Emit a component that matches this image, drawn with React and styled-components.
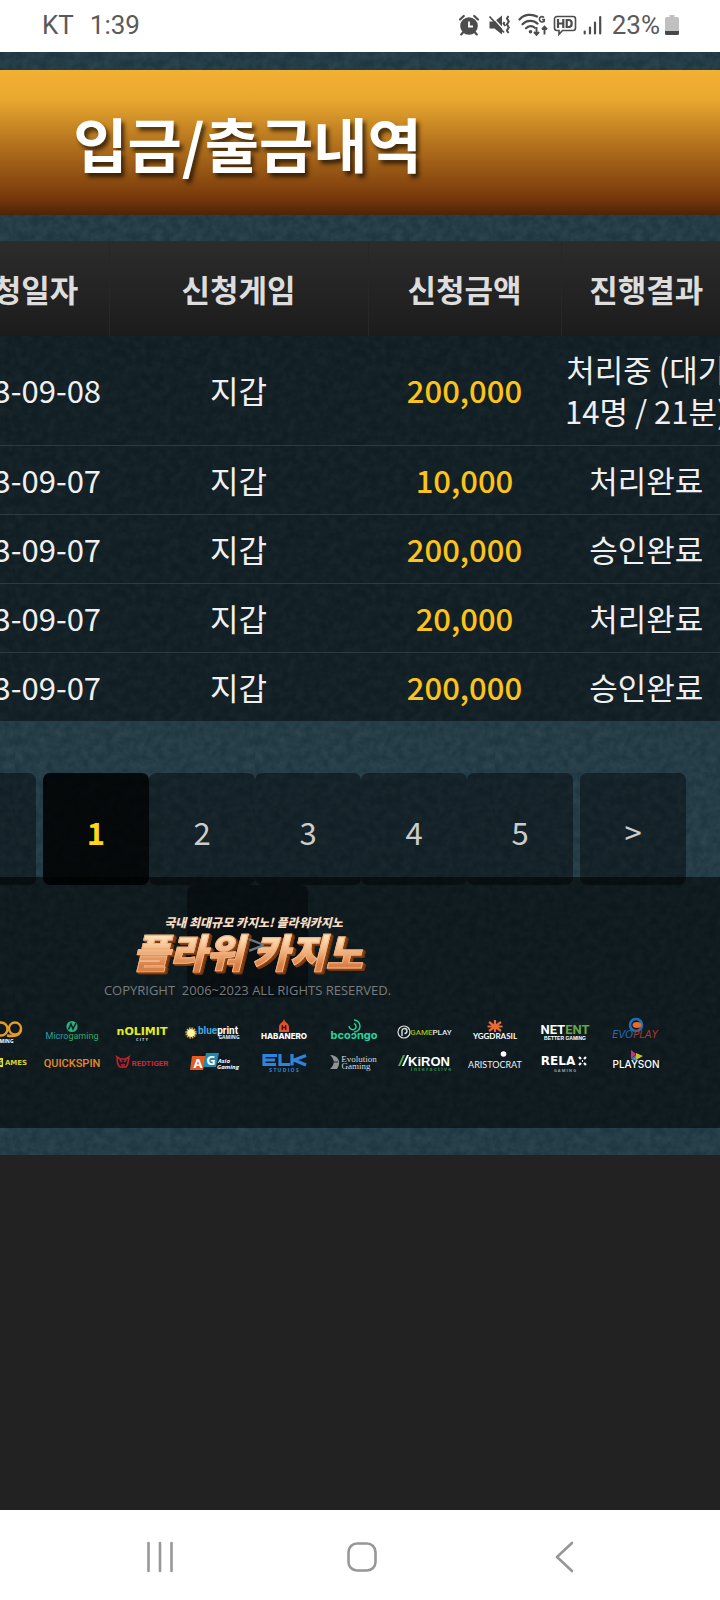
import React from "react";
import styled, { createGlobalStyle, css } from "styled-components";

const noise =
  "url(\"data:image/svg+xml,%3Csvg xmlns='http://www.w3.org/2000/svg' width='240' height='240'%3E%3Cfilter id='n'%3E%3CfeTurbulence type='fractalNoise' baseFrequency='0.12' numOctaves='3' stitchTiles='stitch'/%3E%3CfeColorMatrix values='0 0 0 0 0.35 0 0 0 0 0.42 0 0 0 0 0.42 0 0.2 0 0 -0.05'/%3E%3C/filter%3E%3Crect width='240' height='240' filter='url(%23n)'/%3E%3C/svg%3E\")";

const GlobalStyle = createGlobalStyle`
  * {
    box-sizing: border-box;
  }

  body {
    margin: 0;
    background: #222222;
    font-family: "Noto Sans CJK KR", "Noto Sans", sans-serif;
  }
`;

const Screen = styled.div`
  display: flex;
  flex-direction: column;
  min-height: 100vh;
  overflow: hidden;
`;

const StatusBar = styled.header`
  display: flex;
  align-items: center;
  justify-content: space-between;
  height: 52px;
  padding: 0 40px 2px 42px;
  background: white;
  color: #5a5a5a;
  font-family: Roboto, sans-serif;
  font-size: 26px;
  line-height: 32px;
`;

const StatusLeft = styled.div`
  display: flex;
  gap: 16px;
`;

const StatusRight = styled.div`
  display: flex;
  align-items: center;
  gap: 5px;

  svg {
    display: block;
  }
`;

/* the page is wider than the window and is panned to its right end */
const Site = styled.main`
  width: calc(100% + 225px);
  margin-left: -225px;
  padding: 18px 0 27px;
  background: ${noise}, #1e3742;
`;

const Banner = styled.div`
  display: flex;
  align-items: center;
  justify-content: center;
  height: 145px;
  margin-bottom: 26px;
  background: linear-gradient(
    #f2b034 0%,
    #e9a930 20%,
    #b9771f 48%,
    #8f4f12 74%,
    #78390b 88%,
    #4c2407 100%
  );
`;

const Title = styled.h1`
  margin: 0;
  color: #ffffff;
  font-size: 59px;
  font-weight: 700;
  line-height: 84px;
  text-shadow: 3px 4px 4px rgba(0, 0, 0, 0.65);
`;

const History = styled.table`
  width: calc(100% - 147px);
  margin-left: 159px;
  border-collapse: collapse;
  table-layout: fixed;
  font-size: 31px;
  line-height: 42px;
  text-align: center;
`;

const HeadCell = styled.th`
  width: ${(props) => props.$width || "auto"};
  height: 95px;
  padding: 0;
  border-right: 1px solid #272727;
  color: #dddddd;
  font-weight: 700;
`;

const HeadRow = styled.tr`
  background: linear-gradient(#2c2c2c, #1c1c1c);
`;

const Row = styled.tr`
  background: rgba(0, 0, 0, 0.45);
  border-bottom: 1px solid #2c3b42;
`;

const Cell = styled.td`
  height: 69px;
  padding: 12px 0 13px;
  color: ${(props) => (props.$amount ? "#fcc419" : "#f0f0f0")};
  font-weight: ${(props) => (props.$amount ? 500 : 400)};
  white-space: nowrap;
`;

/* the last button wraps and hangs down over the footer */
const Pagination = styled.nav`
  display: flex;
  flex-wrap: wrap;
  align-content: flex-start;
  justify-content: center;
  height: 104px;
  margin-top: 51px;
`;

const PageButton = styled.button`
  width: ${(props) => (props.$edge ? "121px" : "106px")};
  height: 112px;
  margin: ${(props) => (props.$step ? props.$step : "0")};
  padding: 6px 0 0 ${(props) => (props.$edge ? "18px" : "0")};
  border: none;
  border-radius: 7px;
  background: rgba(0, 0, 0, 0.42);
  color: ${(props) => (props.$edge ? "#70757a" : "#cccccc")};
  font-family: inherit;
  font-size: 31px;
  line-height: 42px;

  span {
    position: relative;
    z-index: 2;
  }

  ${(props) =>
    props.$active &&
    css`
      background: rgba(0, 0, 0, 0.85);
      color: #ffd814;
      font-weight: 700;
    `}
`;

const Footer = styled.footer`
  height: 251px;
  padding-top: 36px;
  background: rgba(0, 0, 0, 0.55);
  text-align: center;
`;

const Tagline = styled.p`
  margin: 0;
  padding-left: 12px;
  color: #f6dcc2;
  font-size: 12px;
  font-style: italic;
  font-weight: 900;
  line-height: 18px;
`;

const Brand = styled.h2`
  width: fit-content;
  margin: 0 auto;
  padding: 0 6px;
  background: linear-gradient(#ffe0b8 15%, #f0ae78 55%, #d98047 85%);
  background-clip: text;
  -webkit-background-clip: text;
  -webkit-text-stroke: 1px #efb285;
  color: transparent;
  filter: drop-shadow(1px 1px 0 #8c4312) drop-shadow(1px 1px 0 #7a3a0e)
    drop-shadow(1px 0 0 #6b300b);
  font-size: 40px;
  font-style: italic;
  font-weight: 900;
  line-height: 40px;
`;

const Copyright = styled.p`
  margin: 9px 0 0;
  color: #777c7f;
  font-family: "Open Sans", sans-serif;
  font-size: 13px;
  line-height: 20px;
  white-space: pre;
`;

const Providers = styled.div`
  display: grid;
  grid-template-columns: repeat(10, 1fr);
  justify-items: center;
  margin: 17px 49px 0 192px;

  svg {
    display: block;
    overflow: visible;
    font-family: "Open Sans", sans-serif;
    text-anchor: middle;
  }
`;

const Filler = styled.div`
  flex: 1;
`;

const SystemNav = styled.nav`
  display: flex;
  align-items: center;
  justify-content: center;
  gap: 142px;
  height: 90px;
  padding: 4px 0 0 3px;
  background: white;
`;

const SystemButton = styled.button`
  display: flex;
  align-items: center;
  justify-content: center;
  width: 60px;
  height: 60px;
  padding: 0;
  border: none;
  background: none;

  svg {
    fill: none;
    stroke: #979797;
    stroke-width: 2.6;
    stroke-linecap: round;
    stroke-linejoin: round;
  }
`;

const rows = [
  { date: "2023-09-08", amount: "200,000", result: ["처리중 (대기", "14명 / 21분)"] },
  { date: "2023-09-07", amount: "10,000", result: ["처리완료"] },
  { date: "2023-09-07", amount: "200,000", result: ["승인완료"] },
  { date: "2023-09-07", amount: "20,000", result: ["처리완료"] },
  { date: "2023-09-07", amount: "200,000", result: ["승인완료"] },
];

const AlarmIcon = () => (
  <svg width="25" height="22" viewBox="0 0 25 22">
    <g fill="none" stroke="#4c4c4c" strokeWidth="2.2" strokeLinecap="round">
      <path d="M2 5.5 5.8 2M20 5.5 16.2 2M5 18.5 3.2 20.4M17 18.5l1.8 1.9" />
    </g>
    <circle cx="11" cy="12" r="8.8" fill="#4c4c4c" />
    <path d="M11 7.5v5h4" fill="none" stroke="#fff" strokeWidth="1.8" />
  </svg>
);

const MuteIcon = () => (
  <svg width="25" height="22" viewBox="0 0 25 22">
    <path d="M1.5 7.5h5L14 1.5v19L6.5 14.5h-5z" fill="#4c4c4c" />
    <path d="M3 1.5 17.5 17.5" stroke="#fff" strokeWidth="1.4" />
    <path d="M1.5 2.5 16 18.5" stroke="#4c4c4c" strokeWidth="1.8" />
    <path
      d="M16.5 8l-1 1.5 1.8 2.5M20.5 2l-1.6 2.4 1.9 3-1.9 3 1.9 3-1.9 3 1.6 2.6"
      fill="none"
      stroke="#4c4c4c"
      strokeWidth="2"
    />
  </svg>
);

const WifiIcon = () => (
  <svg width="30" height="24" viewBox="0 0 30 24">
    <g fill="none" stroke="#4c4c4c" strokeWidth="2.2" strokeLinecap="round">
      <path d="M1.5 6.5C6.5 1 14 .8 19 3.5M4.5 11.2c4-4.4 11-4.4 15-.6M8 15.2c2.5-2.6 6.4-2.6 8.8-.4" />
    </g>
    <circle cx="12.5" cy="18.8" r="1.8" fill="#4c4c4c" />
    <path d="M26 4.5c-2-1.8-4.6-.6-4.6 1.8s2.8 3.6 4.8 1.8V6.6h-2" fill="none" stroke="#4c4c4c" strokeWidth="1.6" />
    <path d="M18.5 14v7.5M16 19l2.5 2.8L21 19M26.5 21.5V14M24 16.5l2.5-2.8 2.5 2.8" fill="none" stroke="#4c4c4c" strokeWidth="1.9" />
  </svg>
);

const HdIcon = () => (
  <svg width="24" height="22" viewBox="0 0 24 22">
    <path
      d="M4 2.5h16A2.5 2.5 0 0 1 22.5 5v9a2.5 2.5 0 0 1-2.5 2.5H9.5L6 20.3V16.5H4A2.5 2.5 0 0 1 1.5 14V5A2.5 2.5 0 0 1 4 2.5z"
      fill="none"
      stroke="#4c4c4c"
      strokeWidth="1.6"
    />
    <path
      d="M5 5v9M10.3 5v9M5 9.5h5.3M13.7 5v9M13.7 6h2c4 0 4 7 0 7h-2"
      fill="none"
      stroke="#4c4c4c"
      strokeWidth="2.2"
    />
  </svg>
);

const SignalIcon = () => (
  <svg width="25" height="22" viewBox="0 0 25 22">
    <g stroke="#4c4c4c" strokeWidth="2.2" strokeLinecap="round">
      <path d="M2.7 17.5v2M8 13.5v6M13 8.5v11M18.2 3v16.5" />
    </g>
  </svg>
);

const BatteryIcon = () => (
  <svg width="15" height="22" viewBox="0 0 15 22">
    <path d="M4.5 1h5v2H12a2 2 0 0 1 2 2v12H0V5a2 2 0 0 1 2-2h2.5z" fill="#c0c0c0" />
    <path d="M0 17h14v2.5a1.5 1.5 0 0 1-1.5 1.5h-11A1.5 1.5 0 0 1 0 19.5z" fill="#484848" />
  </svg>
);

const Logo = ({ name, children }) => (
  <svg width="70" height="31" viewBox="0 0 70 31" role="img" aria-label={name}>
    {children}
  </svg>
);

const ProviderLogos = () => (
  <Providers>
    <Logo name="Q9 Gaming">
      <g fill="none" stroke="#e89a24" strokeWidth="2.4">
        <circle cx="34" cy="12" r="6.5" />
        <circle cx="48" cy="11.5" r="6" />
        <path d="M54 12c0 6-6 8-14 6.5" />
      </g>
      <text x="36" y="26" fontSize="5" fontWeight="700" fill="#fff">GAMING</text>
    </Logo>
    <Logo name="Microgaming">
      <circle cx="34" cy="9.5" r="5.6" fill="#2fae7b" />
      <path d="M30.5 12.5 33 7l2 5 3-6" fill="none" stroke="#0d1c22" strokeWidth="1.5" />
      <text x="34" y="22" fontFamily="Roboto" fontSize="9" fill="#2c9fa3">
        Micro<tspan fill="#38a869">gaming</tspan>
      </text>
    </Logo>
    <Logo name="Nolimit City">
      <text x="34" y="18" fontFamily="DejaVu Sans" fontSize="11" fontWeight="700" fill="#e3ec20">nOLIMIT</text>
      <text x="34" y="24" fontSize="4" fontWeight="700" fill="#d7d7d7">C   I   T   Y</text>
    </Logo>
    <Logo name="Blueprint Gaming">
      <circle cx="13" cy="16" r="4" fill="#fff3b0" />
      <circle cx="13" cy="16" r="4.8" fill="none" stroke="#e4b53b" strokeWidth="1.8" strokeDasharray="1.5 1" />
      <text x="40" y="17" fontFamily="Roboto" fontSize="10" fontWeight="700" fill="#4aa5dd">
        blue<tspan fill="#fff">print</tspan>
      </text>
      <text x="51" y="22" fontSize="5" fontWeight="700" fill="#eee">GAMING</text>
    </Logo>
    <Logo name="Habanero">
      <path d="M35 2c1 4 5 4 5 8v5H30v-5c0-4 4-4 5-8z" fill="#e2512d" />
      <path d="M33.3 8v5M36.7 8v5M33.3 10.5h3.4" stroke="#3b120a" strokeWidth="1.3" />
      <text x="35" y="22" fontFamily="Inter" fontSize="8" fontWeight="800" fill="#fff">HABANERO</text>
    </Logo>
    <Logo name="Booongo">
      <g fill="none" stroke="#25cf8e" strokeWidth="1.5">
        <path d="M35 3a6 6 0 0 1 0 12M35 6.500a3.200 3.200 0 0 1 0 6M30 9a4 4 0 0 0 5 3.500" />
      </g>
      <text x="35" y="22" fontFamily="Inter" fontSize="11" fontWeight="700" fill="#25d6a0">bcoɔngo</text>
    </Logo>
    <Logo name="Gameplay">
      <circle cx="14" cy="15" r="6" fill="none" stroke="#ddd" strokeWidth="1.2" />
      <path d="M12 19v-5.5a2.5 2.5 0 1 1 2.5 3" fill="none" stroke="#ddd" strokeWidth="1.4" />
      <text x="41" y="18" fontFamily="Roboto" fontSize="8" fontWeight="500" fill="#9cb81c">
        GAME<tspan fill="#e5e5e5">PLAY</tspan>
      </text>
    </Logo>
    <Logo name="Yggdrasil">
      <path d="M35 3v12M29 5l12 9M41 5 29 14M27.500 9.500h15" stroke="#e96a35" strokeWidth="2.2" />
      <text x="35" y="22" fontFamily="Lato" fontSize="8" fontWeight="700" fill="#fff">YGGDRASIL</text>
    </Logo>
    <Logo name="NetEnt">
      <text x="35" y="17" fontFamily="Roboto" fontSize="13" fontWeight="700" fill="#fff">
        NET<tspan fill="#62a744">ENT</tspan>
      </text>
      <text x="35" y="23" fontFamily="Liberation Sans" fontSize="5" fontWeight="700" fill="#fff">BETTER GAMING</text>
    </Logo>
    <Logo name="Evoplay">
      <circle cx="35" cy="8" r="6" fill="none" stroke="#1e6fb8" strokeWidth="2.6" />
      <ellipse cx="36" cy="8" rx="4.5" ry="3" fill="#ee6a2c" />
      <text x="34" y="21" fontFamily="DejaVu Sans" fontSize="10" fontStyle="italic" fill="#2467bd">
        EVO<tspan fill="#a83a32">PLAY</tspan>
      </text>
    </Logo>

    <Logo name="Games">
      <rect x="24" y="10" width="12" height="9" fill="#e2dc25" />
      <text x="49" y="17" fontFamily="DejaVu Sans" fontSize="7" fontWeight="700" fill="#d8d426">AMES</text>
      <text x="32" y="17" fontFamily="DejaVu Sans" fontSize="7" fontWeight="700" fill="#14242a">G</text>
    </Logo>
    <Logo name="Quickspin">
      <text x="34" y="19" fontFamily="Roboto" fontSize="11" fontWeight="500" fill="#e58a28">QUICKSPIN</text>
    </Logo>
    <Logo name="Red Tiger">
      <path d="M9 9c1 3-1 7 3 10h6c3-3 2-7 3-10l-3 2h-6zM12 12l2 2M18 12l-2 2M13 17h4" fill="none" stroke="#c8202f" strokeWidth="1.6" />
      <text x="42" y="18" fontFamily="Roboto" fontSize="8" fontWeight="700" fill="#d32535">REDTIGER</text>
    </Logo>
    <Logo name="Asia Gaming">
      <path d="M14 8h14l-3 14H12z" fill="#e35a24" />
      <path d="M28 5h13l-3 14H25z" fill="#2089ae" />
      <text x="20" y="20" fontSize="13" fontWeight="700" fill="#fff">A</text>
      <text x="33" y="17" fontSize="13" fontWeight="700" fill="#fff">G</text>
      <text x="46" y="15" fontSize="6" fontStyle="italic" fontWeight="700" fill="#fff">Asia</text>
      <text x="50" y="21" fontSize="6" fontStyle="italic" fontWeight="700" fill="#fff">Gaming</text>
    </Logo>
    <Logo name="ELK Studios">
      <g fill="none" stroke="#2f83dc" strokeWidth="3.2">
        <path d="M28 7.500H15v9h12M15 12h11M31 6v10.500h10M43 6v11.500M57 7.500 45 12l12 5" />
      </g>
      <text x="35" y="24" fontSize="5" fontWeight="700" fill="#2f83dc">S  T  U  D  I  O  S</text>
    </Logo>
    <Logo name="Evolution Gaming">
      <path d="M11 7c8 0 12 7 7 14h-7c5-5 5-9 0-14z" fill="#8d9396" />
      <path d="M10 14h9" stroke="#10202a" />
      <text x="40" y="14" fontFamily="Liberation Serif" fontSize="9" fill="#d8d8d8">Evolution</text>
      <text x="37" y="21" fontFamily="Liberation Serif" fontSize="9" fill="#d8d8d8">Gaming</text>
    </Logo>
    <Logo name="Kiron Interactive">
      <path d="M8 18l5-11h2l-5 11z" fill="#48b04f" />
      <path d="M12 18l5-11h2l-5 11z" fill="#fff" />
      <text x="39" y="18" fontFamily="Liberation Sans" fontSize="13" fontWeight="700" fill="#fff">KiRON</text>
      <text x="41" y="23" fontSize="5" fontWeight="700" fill="#2f8b48">i n t e r a c t i v e</text>
    </Logo>
    <Logo name="Aristocrat">
      <circle cx="43.5" cy="6" r="2.8" fill="#fff" />
      <text x="35" y="20" fontFamily="Lato" fontSize="9" fill="#f1f1f1">ARISTOCRAT</text>
    </Logo>
    <Logo name="Relax Gaming">
      <text x="28" y="17" fontFamily="DejaVu Sans" fontSize="12" fontWeight="700" fill="#fff">RELA</text>
      <path d="M49 9l2 2M56 9l-2 2M49 17l2-2M56 17l-2-2M52 13h1" stroke="#fff" strokeWidth="2.2" />
      <text x="35" y="24" fontSize="4" fontWeight="700" fill="#9a9fa2">G      A      M      I      N      G</text>
    </Logo>
    <Logo name="Playson">
      <path d="M30 2l5 4-5 5z" fill="#d52b85" />
      <path d="M35 5l7 3-7 4z" fill="#c7c12e" />
      <path d="M30 11l5-4v6z" fill="#2c8cc4" />
      <text x="35" y="20" fontFamily="Inter" fontSize="10" fontWeight="500" fill="#fff">PLAYSON</text>
    </Logo>
  </Providers>
);

const App = () => {
  return (
    <>
      <GlobalStyle />
      <Screen>
        <StatusBar>
          <StatusLeft>
            <span>KT</span>
            <span>1:39</span>
          </StatusLeft>
          <StatusRight>
            <AlarmIcon />
            <MuteIcon />
            <WifiIcon />
            <HdIcon />
            <SignalIcon />
            <span>23%</span>
            <BatteryIcon />
          </StatusRight>
        </StatusBar>

        <Site>
          <Banner>
            <Title>입금/출금내역</Title>
          </Banner>

          <History>
            <thead>
              <HeadRow>
                <HeadCell $width="175px">신청일자</HeadCell>
                <HeadCell $width="259px">신청게임</HeadCell>
                <HeadCell $width="193px">신청금액</HeadCell>
                <HeadCell>진행결과</HeadCell>
              </HeadRow>
            </thead>
            <tbody>
              {rows.map((row, i) => (
                <Row key={i}>
                  <Cell>{row.date}</Cell>
                  <Cell>지갑</Cell>
                  <Cell $amount>{row.amount}</Cell>
                  <Cell>
                    {row.result.map((line) => (
                      <div key={line}>{line}</div>
                    ))}
                  </Cell>
                </Row>
              ))}
            </tbody>
          </History>

          <Pagination>
            <PageButton $edge aria-label="처음" />
            <PageButton $step="0 7px 0 0">
              <span>&lt;</span>
            </PageButton>
            {[1, 2, 3, 4, 5].map((page) => (
              <PageButton key={page} $active={page === 1}>
                <span>{page}</span>
              </PageButton>
            ))}
            <PageButton $step="0 0 0 7px">
              <span>&gt;</span>
            </PageButton>
            <PageButton $edge>
              <span>&gt;</span>
            </PageButton>
          </Pagination>

          <Footer>
            <Tagline>국내 최대규모 카지노! 플라워카지노</Tagline>
            <Brand>플라워 카지노</Brand>
            <Copyright>COPYRIGHT  2006~2023 ALL RIGHTS RESERVED.</Copyright>
            <ProviderLogos />
          </Footer>
        </Site>

        <Filler />

        <SystemNav>
          <SystemButton aria-label="최근 앱">
            <svg width="32" height="32" viewBox="0 0 32 32">
              <path d="M4.5 2v28M16 2v28M27.5 2v28" />
            </svg>
          </SystemButton>
          <SystemButton aria-label="홈">
            <svg width="32" height="32" viewBox="0 0 32 32">
              <rect x="2.5" y="2.5" width="27" height="27" rx="8.5" />
            </svg>
          </SystemButton>
          <SystemButton aria-label="뒤로">
            <svg width="32" height="32" viewBox="0 0 32 32">
              <path d="M24 2 9 16l15 14" />
            </svg>
          </SystemButton>
        </SystemNav>
      </Screen>
    </>
  );
};

export default App;
